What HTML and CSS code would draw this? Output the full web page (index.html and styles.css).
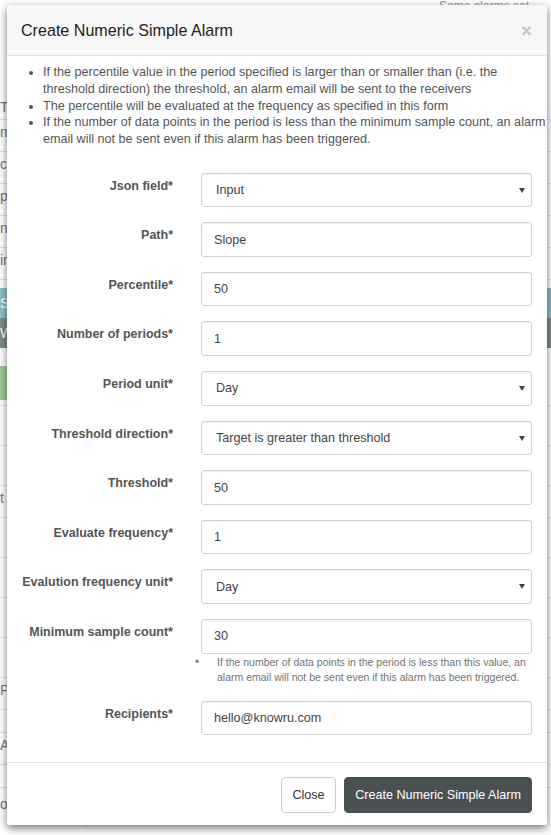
FILE: index.html
```html
<!DOCTYPE html>
<html lang="en">
<head>
    <meta charset="UTF-8">
    <meta name="viewport" content="width=device-width, initial-scale=1.0">
    <title>Create Numeric Simple Alarm</title>
    <link rel="stylesheet" href="styles.css">
</head>
<body>
    <!-- page behind the dialog -->
    <div class="page">
        <div class="page-note">Some alarms set</div>
        <div class="list-row first">Th</div>
        <div class="list-row">m</div>
        <div class="list-row">co</div>
        <div class="list-row">po</div>
        <div class="list-row">n</div>
        <div class="list-row">ir</div>
        <div class="bar bar-info">Si</div>
        <div class="bar bar-gray">W</div>
        <div class="btn-row"><span class="green-btn"></span></div>
        <div class="list-row tall"></div>
        <div class="list-row tall"></div>
        <div class="list-row">t</div>
        <div class="list-row tall"></div>
        <div class="list-row tall"></div>
        <div class="list-row tall"></div>
        <div class="list-row tall"></div>
        <div class="list-row">Pr</div>
        <div class="list-row short"></div>
        <div class="list-row">Ar</div>
        <div class="list-row short"></div>
        <div class="table-row"><span class="cell">oc</span><span class="cell">133</span></div>
    </div>

    <div class="modal">
        <div class="modal-header">
            <h4 class="modal-title">Create Numeric Simple Alarm</h4>
            <button type="button" class="close">&times;</button>
        </div>

        <div class="modal-body">
            <ul class="notes">
                <li>If the percentile value in the period specified is larger than or smaller than (i.e. the threshold direction) the threshold, an alarm email will be sent to the receivers</li>
                <li>The percentile will be evaluated at the frequency as specified in this form</li>
                <li>If the number of data points in the period is less than the minimum sample count, an alarm email will not be sent even if this alarm has been triggered.</li>
            </ul>

            <form class="alarm-form">
                <div class="form-group">
                    <label for="jsonField">Json field*</label>
                    <div class="select-wrap">
                        <select id="jsonField" class="form-control"><option>Input</option></select>
                    </div>
                </div>
                <div class="form-group">
                    <label for="path">Path*</label>
                    <input type="text" id="path" class="form-control" value="Slope">
                </div>
                <div class="form-group">
                    <label for="percentile">Percentile*</label>
                    <input type="text" id="percentile" class="form-control" value="50">
                </div>
                <div class="form-group">
                    <label for="periods">Number of periods*</label>
                    <input type="text" id="periods" class="form-control" value="1">
                </div>
                <div class="form-group">
                    <label for="periodUnit">Period unit*</label>
                    <div class="select-wrap">
                        <select id="periodUnit" class="form-control"><option>Day</option></select>
                    </div>
                </div>
                <div class="form-group">
                    <label for="direction">Threshold direction*</label>
                    <div class="select-wrap">
                        <select id="direction" class="form-control"><option>Target is greater than threshold</option></select>
                    </div>
                </div>
                <div class="form-group">
                    <label for="threshold">Threshold*</label>
                    <input type="text" id="threshold" class="form-control" value="50">
                </div>
                <div class="form-group">
                    <label for="frequency">Evaluate frequency*</label>
                    <input type="text" id="frequency" class="form-control" value="1">
                </div>
                <div class="form-group">
                    <label for="frequencyUnit">Evalution frequency unit*</label>
                    <div class="select-wrap">
                        <select id="frequencyUnit" class="form-control"><option>Day</option></select>
                    </div>
                </div>
                <div class="form-group">
                    <label for="minCount">Minimum sample count*</label>
                    <input type="text" id="minCount" class="form-control" value="30">
                    <ul class="help-list">
                        <li>If the number of data points in the period is less than this value, an alarm email will not be sent even if this alarm has been triggered.</li>
                    </ul>
                </div>
                <div class="form-group">
                    <label for="recipients">Recipients*</label>
                    <input type="text" id="recipients" class="form-control" value="hello@knowru.com">
                </div>
            </form>
        </div>

        <div class="modal-footer">
            <button type="button" class="btn btn-default">Close</button>
            <button type="button" class="btn btn-dark">Create Numeric Simple Alarm</button>
        </div>
    </div>
</body>
</html>
```

FILE: styles.css
```css
body {
    margin: 0;
    font-family: "Liberation Sans", Arial, sans-serif;
    font-size: 12.6px;
    color: #555;
    background-color: #fff;
}

/* background page */
.page {
    height: 835px;
    overflow: hidden;
    color: #777;
    font-size: 14px;
}
.page-note {
    height: 95px;
    padding: 0 22px 0 0;
    line-height: 12px;
    text-align: right;
    color: #999;
    font-size: 12px;
}
.list-row {
    height: 32px;
    line-height: 24px;
    border-bottom: 1px solid #e3e3e3;
    box-sizing: border-box;
}
.list-row.first {
    height: 25px;
}
.list-row.tall {
    height: 40px;
}
.list-row.short {
    height: 23px;
}
.bar {
    height: 30px;
    line-height: 30px;
    color: #fff;
    margin-top: 8px;
}
.bar-info {
    background-color: #8dbfcf;
}
.bar-gray {
    background-color: #838b8b;
    margin-top: 0;
}
.btn-row {
    height: 58px;
    padding-top: 18px;
    box-sizing: border-box;
    border-bottom: 1px solid #e3e3e3;
}
.green-btn {
    display: block;
    width: 60px;
    height: 34px;
    margin-left: -50px;
    border-radius: 4px;
    background-color: #9ccc94;
}
.table-row {
    display: flex;
    height: 40px;
}
.table-row .cell:first-child {
    width: 86px;
    padding-top: 8px;
    border-right: 1px solid #ddd;
}
.table-row .cell + .cell {
    padding: 20px 0 0 12px;
    color: #666;
}

/* dialog */
.modal {
    position: absolute;
    top: 5px;
    left: 7px;
    width: 540px;
    background-color: #fff;
    border-radius: 2px;
    box-shadow: 0 3px 9px rgba(0, 0, 0, 0.55);
}
.modal-header {
    display: flex;
    align-items: center;
    justify-content: space-between;
    height: 51px;
    box-sizing: border-box;
    padding: 0 15px 0 14px;
    background-color: #f7f7f7;
    border-bottom: 1px solid #e2e2e2;
    border-radius: 2px 2px 0 0;
}
.modal-title {
    margin: 0;
    font-size: 16.1px;
    font-weight: normal;
    color: #222;
}
.close {
    padding: 0;
    border: none;
    background: none;
    font-family: inherit;
    font-size: 19px;
    font-weight: bold;
    line-height: 1;
    color: #000;
    opacity: 0.2;
    cursor: pointer;
}
.modal-body {
    padding: 8px 15px 12px;
}
.notes {
    margin: 0 -17px 24.7px 0;
    padding-left: 21px;
    line-height: 16.8px;
}

.form-group {
    display: grid;
    grid-template-columns: 151px 1fr;
    column-gap: 28px;
    margin-bottom: 15px;
}
.form-group label {
    grid-column: 1;
    padding-top: 5px;
    text-align: right;
    font-size: 12.5px;
    font-weight: bold;
    line-height: 16.8px;
    color: #555;
}
.form-control {
    display: block;
    width: 100%;
    height: 34.6px;
    box-sizing: border-box;
    padding: 0 12px;
    font-family: inherit;
    font-size: 12.6px;
    color: #444;
    background-color: #fff;
    border: 1px solid #d2d2d2;
    border-radius: 3px;
    box-shadow: inset 0 1px 1px rgba(0, 0, 0, 0.06);
}
select.form-control {
    -webkit-appearance: none;
    appearance: none;
    padding-left: 14px;
}
.select-wrap {
    position: relative;
}
.select-wrap::after {
    content: "";
    position: absolute;
    right: 7px;
    top: 15px;
    border-left: 3px solid transparent;
    border-right: 3px solid transparent;
    border-top: 5px solid #444;
}
.help-list {
    grid-column: 2;
    margin: 1px 0 0;
    padding-left: 16px;
    list-style: none;
    font-size: 10.5px;
    line-height: 15.5px;
    color: #737373;
}
.help-list li::before {
    content: "\2022";
    display: inline-block;
    width: 22px;
    margin-left: -22px;
    font-size: 12px;
    color: #888;
}

.modal-footer {
    display: flex;
    justify-content: flex-end;
    gap: 8.5px;
    padding: 14px 15px 12px;
    border-top: 1px solid #e5e5e5;
}
.btn {
    height: 36px;
    padding: 0 10px;
    font-family: inherit;
    font-size: 12.6px;
    border: 1px solid transparent;
    border-radius: 4px;
    cursor: pointer;
}
.btn-default {
    background-color: #fff;
    border-color: #ccc;
    color: #333;
}
.btn-dark {
    background-color: #4a5153;
    border-color: #4a5153;
    color: #fff;
}
```
